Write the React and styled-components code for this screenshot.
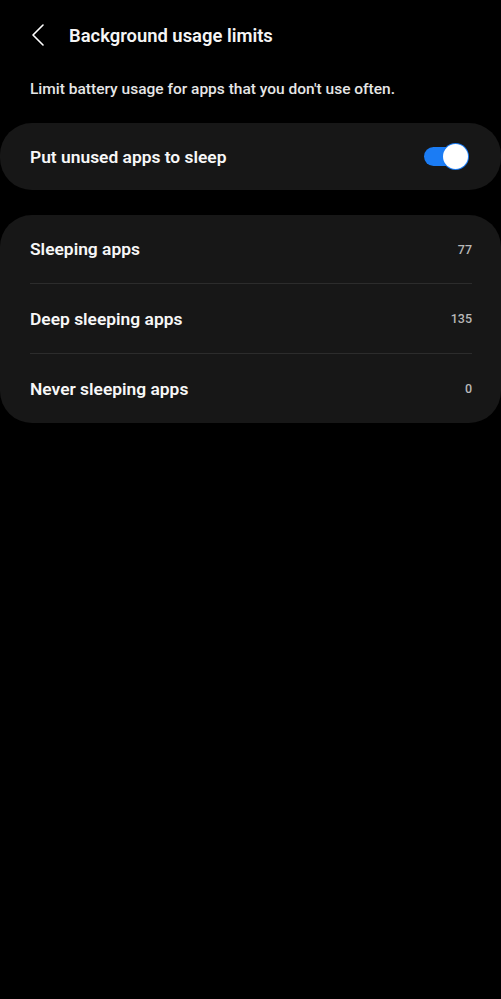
import React from 'react';
import styled, { createGlobalStyle } from 'styled-components';

const GlobalStyle = createGlobalStyle`
  html, body {
    margin: 0;
    padding: 0;
    background: #000;
  }
  body {
    font-family: Roboto, "Noto Sans", "Liberation Sans", sans-serif;
    color: #fafafa;
  }
`;

const Screen = styled.div`
  width: 501px;
  min-height: 999px;
  background: #000;
  box-sizing: border-box;
`;

const Header = styled.div`
  display: flex;
  align-items: center;
  height: 70px;
  padding-left: 28px;
  box-sizing: border-box;
`;

const BackButton = styled.button`
  display: flex;
  align-items: center;
  justify-content: center;
  width: 20px;
  height: 30px;
  padding: 0;
  margin-right: 21px;
  background: none;
  border: none;
  color: #fff;
`;

const Title = styled.h1`
  margin: 0;
  font-size: 18.4px;
  font-weight: 600;
  color: #f5f5f5;
`;

const Description = styled.p`
  margin: 10px 0 25px;
  padding: 0 30px;
  font-size: 15.5px;
  font-weight: 500;
  color: #e6e6e6;
`;

const Card = styled.div`
  background: #171717;
  border-radius: 32px;
  margin-bottom: ${(props) => props.$gap || 0}px;
`;

const Row = styled.div`
  display: flex;
  align-items: center;
  justify-content: space-between;
  height: ${(props) => props.$height || 68}px;
  margin: 0 29px 0 30px;
  border-top: ${(props) => (props.$divider ? '1px solid #2c2c2c' : 'none')};
`;

const Label = styled.span`
  font-size: 17.4px;
  font-weight: 600;
  color: #f7f7f7;
`;

const Value = styled.span`
  font-size: 12.5px;
  font-weight: 500;
  color: #b9b9b9;
`;

const Track = styled.div`
  position: relative;
  width: 42px;
  height: 19px;
  border-radius: 10px;
  background: #1b7cf4;
  margin-right: 6px;
`;

const Thumb = styled.div`
  position: absolute;
  top: -3px;
  right: -2px;
  width: 25px;
  height: 25px;
  border-radius: 50%;
  background: #fff;
  box-shadow: 0 0 0 1px #1b7cf4;
`;

const items = [
  { label: 'Sleeping apps', value: '77' },
  { label: 'Deep sleeping apps', value: '135' },
  { label: 'Never sleeping apps', value: '0' },
];

export default function App() {
  return (
    <Screen>
      <GlobalStyle />
      <Header>
        <BackButton aria-label="Back">
          <svg width="14" height="22" viewBox="0 0 14 22" fill="none">
            <path d="M12 1 L2 11 L12 21" stroke="#fff" strokeWidth="1.6" strokeLinecap="round" strokeLinejoin="round" />
          </svg>
        </BackButton>
        <Title>Background usage limits</Title>
      </Header>
      <Description>Limit battery usage for apps that you don't use often.</Description>
      <Card $gap={25}>
        <Row $height={67}>
          <Label>Put unused apps to sleep</Label>
          <Track>
            <Thumb />
          </Track>
        </Row>
      </Card>
      <Card>
        {items.map((item, i) => (
          <Row key={item.label} $divider={i > 0} $height={i === 0 ? 68 : 69}>
            <Label>{item.label}</Label>
            <Value>{item.value}</Value>
          </Row>
        ))}
      </Card>
    </Screen>
  );
}
